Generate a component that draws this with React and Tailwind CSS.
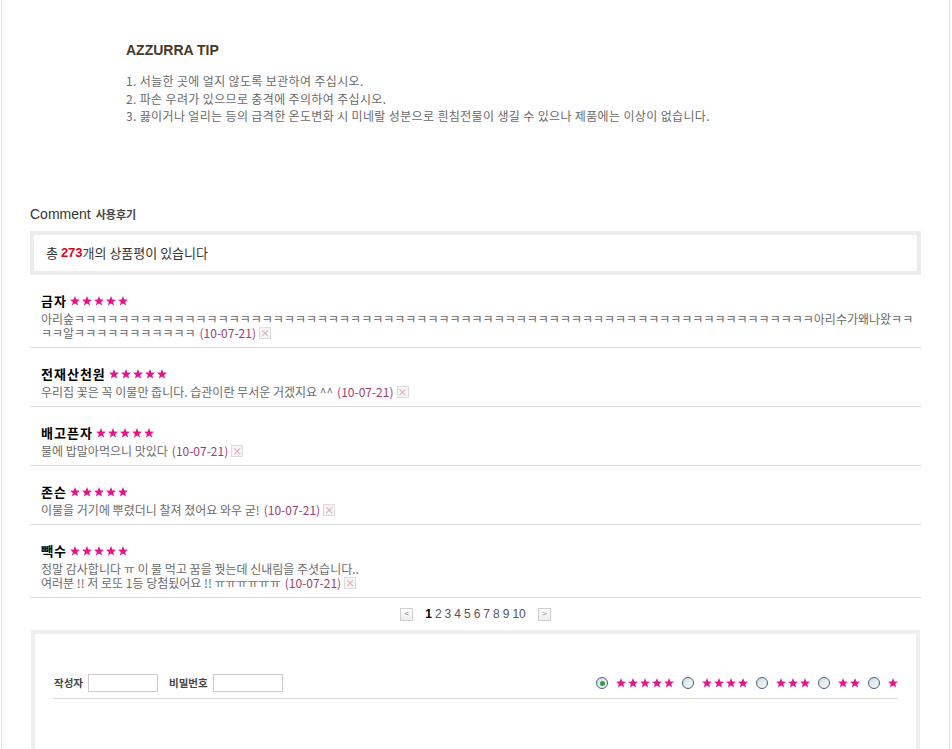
const KR = "font-['Noto_Sans_CJK_KR',sans-serif]";

function Stars({ n }) {
  return (
    <span className="inline-flex items-center gap-[2px]">
      {Array.from({ length: n }).map((_, i) => (
        <svg key={i} width="10" height="10" viewBox="0 0 10 10">
          <polygon
            points="5,0.1 6.35,3.44 9.95,3.69 7.19,6.01 8.06,9.51 5,7.6 1.94,9.51 2.81,6.01 0.05,3.69 3.65,3.44"
            fill="#e3158a"
          />
        </svg>
      ))}
    </span>
  );
}

function Del() {
  return (
    <span className="flex w-[12px] h-[12px] ml-[3px] items-center justify-center border border-[#dcdcdc] bg-[#f6f6f6] text-[10px] leading-none text-[#d39aae]">
      ×
    </span>
  );
}

const reviews = [
  {
    name: "금자",
    lines: [
      "아리숲" + "ㅋ".repeat(67) + "아리수가왜나왔ㅋㅋ",
      "ㅋㅋ알" + "ㅋ".repeat(11),
    ],
  },
  { name: "전재산천원", lines: ["우리집 꽃은 꼭 이물만 줍니다. 습관이란 무서운 거겠지요 ^^"] },
  { name: "배고픈자", lines: ["물에 밥말아먹으니 맛있다"] },
  { name: "존슨", lines: ["이물을 거기에 뿌렸더니 찰져 졌어요 와우 굳!"] },
  {
    name: "빽수",
    lines: [
      "정말 감사합니다 ㅠ 이 물 먹고 꿈을 꿧는데 신내림을 주셧습니다..",
      "여러분 !! 저 로또 1등 당첨됬어요 !! ㅠㅠㅠㅠㅠㅠ",
    ],
  },
];

function Radio({ checked }) {
  return (
    <span className="inline-flex w-[12px] h-[12px] rounded-full border border-[#42607e] bg-gradient-to-br from-[#d6dde6] to-[#fbfbfb] items-center justify-center">
      {checked && <span className="w-[5px] h-[5px] rounded-full bg-[#2fa33a]" />}
    </span>
  );
}

export default function App() {
  return (
    <div className={`h-[749px] overflow-hidden bg-white ${KR}`}>
      <div className="ml-[1px] w-[949px] h-full border-x border-[#e2e2e2]">
        {/* tip */}
        <div className="pl-[124px] pt-[40px]">
          <h3 className="text-[14px] leading-[20px] font-bold text-[#4a3726] font-['Liberation_Sans',sans-serif]">
            AZZURRA TIP
          </h3>
          <ul className="mt-[12px] text-[12px] tracking-[0.35px] leading-[17.5px] text-[#6a6a6a]">
            <li>1. 서늘한 곳에 얼지 않도록 보관하여 주십시오.</li>
            <li>2. 파손 우려가 있으므로 충격에 주의하여 주십시오.</li>
            <li>
              3. 끓이거나 얼리는 등의 급격한 온도변화 시 미네랄 성분으로 흰침전물이 생길 수 있으나
              제품에는 이상이 없습니다.
            </li>
          </ul>
        </div>

        <div className="ml-[28px] w-[891px] mt-[81px]">
          <div className="h-[18px] flex items-center gap-[5px] text-[#333]">
            <span className="text-[14px] font-['Liberation_Sans',sans-serif]">Comment</span>
            <span className="text-[11px] font-bold text-[#444]">사용후기</span>
          </div>

          <div className="mt-[7.5px] h-[44px] border-4 border-[#ececec] flex items-center pl-[12px] text-[13px] text-[#333]">
            총&nbsp;<b className="text-[#e0001b] font-['Liberation_Sans',sans-serif]">273</b>개의 상품평이 있습니다
          </div>

          {reviews.map((r, i) => (
            <div key={i} className="px-[11px] pt-[18px] pb-[7px] border-b border-[#dcdcdc]">
              <div className="h-[16px] flex items-center">
                <span className="text-[13px] font-bold text-black tracking-[1px]">{r.name}</span>
                <span className="ml-[3px] flex">
                  <Stars n={5} />
                </span>
              </div>
              <div className="mt-[3px] text-[12px] text-[#6b6b6b]">
                {r.lines.map((l, j) => (
                  <div key={j} className="h-[14px] flex items-center whitespace-nowrap">
                    <span>{l}</span>
                    {j === r.lines.length - 1 && (
                      <>
                        <span className="ml-[4px] text-[#9b3c73]">(10-07-21)</span>
                        <Del />
                      </>
                    )}
                  </div>
                ))}
              </div>
            </div>
          ))}

          <div className="h-[32px] flex items-center justify-center text-[12px] font-['Liberation_Sans',sans-serif]">
            <span className="w-[13px] h-[13px] border border-[#cfcfcf] bg-gradient-to-b from-white to-[#ececec] flex items-center justify-center text-[8px] text-[#888]">
              &lt;
            </span>
            <div className="mx-[12px] flex gap-[3px] text-[#555]">
              <b className="text-black">1</b>
              {[2, 3, 4, 5, 6, 7, 8, 9, 10].map((p) => (
                <span key={p}>{p}</span>
              ))}
            </div>
            <span className="w-[13px] h-[13px] border border-[#cfcfcf] bg-gradient-to-b from-white to-[#ececec] flex items-center justify-center text-[8px] text-[#888]">
              &gt;
            </span>
          </div>

          <div className="mx-[1px] h-[300px] border-4 border-[#efefef] pl-[19px] pr-[18px] pt-[40px]">
            <div className="flex items-center h-[18px]">
              <span className="text-[10.5px] font-bold text-[#444]">작성자</span>
              <span className="ml-[5px] w-[70px] h-[18px] border border-[#cdcdcd]" />
              <span className="ml-[11px] text-[10.5px] font-bold text-[#444]">비밀번호</span>
              <span className="ml-[5px] w-[70px] h-[18px] border border-[#cdcdcd]" />
              <div className="ml-auto flex items-center gap-[8px]">
                {[5, 4, 3, 2, 1].map((n) => (
                  <span key={n} className="flex items-center gap-[8px]">
                    <Radio checked={n === 5} />
                    <Stars n={n} />
                  </span>
                ))}
              </div>
            </div>
            <div className="mt-[6px] -ml-px border-b border-[#dddddd]" />
          </div>
        </div>
      </div>
    </div>
  );
}
